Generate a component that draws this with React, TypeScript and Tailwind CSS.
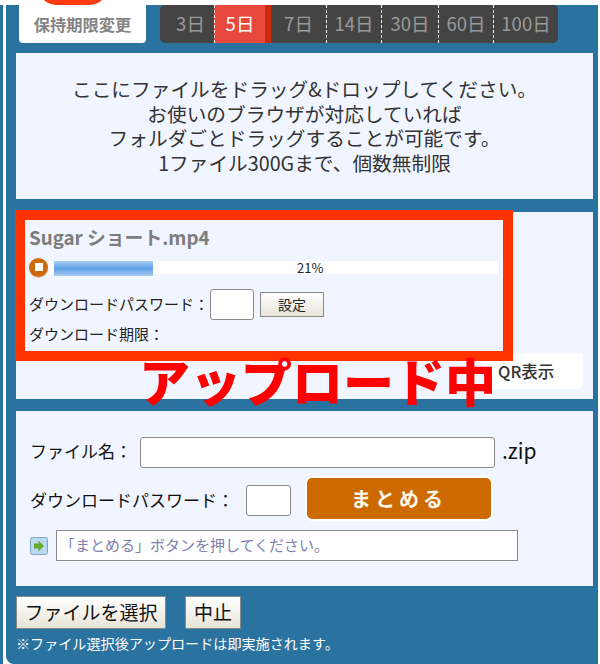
const jp = "font-['Noto_Sans_CJK_JP','Noto_Sans',sans-serif]";

function PeriodTabs() {
  return (
    <div className="flex h-[38px] w-[398px] overflow-hidden rounded-[5px] bg-[#444444] text-[18.5px] text-[#9a9a9a]">
      <div className="flex w-[54px] items-center justify-center pl-[7px]">3日</div>
      <div className="flex w-[57px] border-l border-dashed border-white bg-[#e8493c] text-white">
        <div className="flex flex-1 items-center justify-center">5日</div>
        <div className="w-[6px] bg-[#d0280f]" />
      </div>
      <div className="flex w-[55px] items-center justify-center">7日</div>
      <div className="flex w-[55px] items-center justify-center border-l border-dashed border-white">14日</div>
      <div className="flex w-[57px] items-center justify-center border-l border-dashed border-white">30日</div>
      <div className="flex w-[55px] items-center justify-center border-l border-dashed border-white">60日</div>
      <div className="flex flex-1 items-center justify-center border-l border-dashed border-white">100日</div>
    </div>
  );
}

function TextBox({ className }: { className: string }) {
  return <div className={"rounded-[3px] border border-[#8a8a8a] bg-white " + className} />;
}

export default function App() {
  return (
    <div className={"relative flex h-[664px] w-[600px] overflow-hidden bg-white pt-[5px] text-[#222222] " + jp}>
      <div className="w-[3px] bg-[#2a72a0]" />
      <div className="ml-[3px] flex w-[592px] flex-col rounded-bl-[8px] bg-[#2a72a0] pl-[10px] pr-[5px]">
        <div className="flex h-[38px] gap-[14px] pl-[3px]">
          <div className="flex h-[38px] w-[127px] items-center justify-center rounded-b-[4px] bg-white text-[16.3px] font-bold text-[#848484]">
            保持期限変更
          </div>
          <PeriodTabs />
        </div>

        <div className="mt-[10px] flex h-[146px] w-[577px] flex-col items-center justify-center bg-[#f0f5ff] text-center text-[19.7px] leading-[24.5px] text-[#333333]">
          <p className="whitespace-nowrap">ここにファイルをドラッグ&amp;ドロップしてください。</p>
          <p className="whitespace-nowrap">お使いのブラウザが対応していれば</p>
          <p className="whitespace-nowrap">フォルダごとドラッグすることが可能です。</p>
          <p className="whitespace-nowrap">1ファイル300Gまで、個数無制限</p>
        </div>

        <div className="mt-[13px] flex h-[187px] w-[577px] flex-col bg-[#f0f5ff] pl-[13px]">
          <div className="mt-[13px] text-[18.8px] font-bold leading-[24px] text-[#7d7d7d]">Sugar ショート.mp4</div>
          <div className="mt-[8px] flex h-[20px] items-center">
            <div className="flex h-[19px] w-[19px] shrink-0 items-center justify-center rounded-full bg-[#cf6a0c] shadow-[0_1px_1px_#d8c8b8]">
              <div className="h-[8px] w-[8px] bg-white" />
            </div>
            <div className="relative ml-[1px] h-[13px] w-[449px] bg-white">
              <div className="ml-[5px] h-[15px] w-[99px] bg-[linear-gradient(#a9cdf3,#5f9fe6_50%,#a9cdf3)]" />
              <span className="absolute left-[248px] top-[-3px] text-[13px] leading-[19px]">21%</span>
            </div>
          </div>
          <div className="mt-[12px] flex h-[31px] items-center text-[15px]">
            <span>ダウンロードパスワード：</span>
            <TextBox className="ml-[1px] h-[31px] w-[44px]" />
            <button className="ml-[6px] h-[25px] w-[64px] border border-[#8a8a8a] bg-linear-to-b from-white to-[#e8e4d8] text-[14px]">設定</button>
          </div>
          <div className="mt-[3px] text-[15px] leading-[22px]">ダウンロード期限：</div>
          <div className="mt-[8px] flex h-[36px] justify-end pr-[10px]">
            <div className="flex w-[100px] items-center rounded-[5px] bg-white pl-[15px] text-[16.5px] font-medium leading-[36px] text-[#333333]">
              QR表示
            </div>
          </div>
        </div>

        <div className="mt-[12px] flex h-[175px] w-[577px] flex-col bg-[#f0f5ff] pl-[14px]">
          <div className="mt-[26px] flex h-[31px] items-center text-[17px] text-[#111111]">
            <span className="mt-[-4px] w-[110px]">ファイル名：</span>
            <TextBox className="h-[31px] w-[355px]" />
            <span className="ml-[7px] mt-[-4px] text-[21px]">.zip</span>
          </div>
          <div className="mt-[10px] flex h-[45px] items-center">
            <span className="mb-[2px] w-[216px] text-[17px] text-[#111111]">ダウンロードパスワード：</span>
            <TextBox className="h-[31px] w-[45px]" />
            <button className="mb-[4px] ml-[14px] flex h-[45px] w-[188px] items-center justify-center rounded-[7px] border-[2px] border-white bg-[#cc6a00] text-[20px] font-bold tracking-[4px] text-[#fdf6ea]">
              まとめる
            </button>
          </div>
          <div className="mt-[7px] flex h-[31px] items-center">
            <svg width="18" height="18" viewBox="0 0 18 18" className="shrink-0">
              <rect x="0.5" y="0.5" width="17" height="17" rx="2" fill="#bcd9f2" stroke="#7ea6c9" />
              <path d="M4 6.5h4.5V3.5L14 9l-5.5 5.5v-3H4z" fill="#68a82a" />
            </svg>
            <div className="ml-[8px] flex h-[31px] w-[462px] items-center border border-[#8a8a8a] bg-white pl-[3px] text-[15px] text-[#7f7fb0]">
              「まとめる」ボタンを押してください。
            </div>
          </div>
        </div>

        <div className="mt-[10px] flex h-[33px] gap-[19px]">
          <button className="h-[33px] w-[150px] border border-[#8a8a8a] bg-linear-to-b from-white to-[#e8e4d8] text-[19px] text-[#111111]">ファイルを選択</button>
          <button className="h-[33px] w-[56px] border border-[#8a8a8a] bg-linear-to-b from-white to-[#e8e4d8] text-[19px] text-[#111111]">中止</button>
        </div>
        <p className="mt-[3px] whitespace-nowrap text-[14.1px] leading-[22px] text-white">※ファイル選択後アップロードは即実施されます。</p>
      </div>

      {/* 画像の上に載っている注釈 */}
      <div className="absolute left-[38px] top-[-32px] h-[37px] w-[70px] rounded-full bg-[#ff3b12]" />
      <div className="absolute left-[15px] top-[210px] h-[151px] w-[498px] border-[10px] border-[#ff3300]" />
      <div className="absolute left-[139px] top-[344px] whitespace-nowrap text-[51px] font-black leading-[72px] text-[#ff0000]">
        アップロード中
      </div>
    </div>
  );
}
